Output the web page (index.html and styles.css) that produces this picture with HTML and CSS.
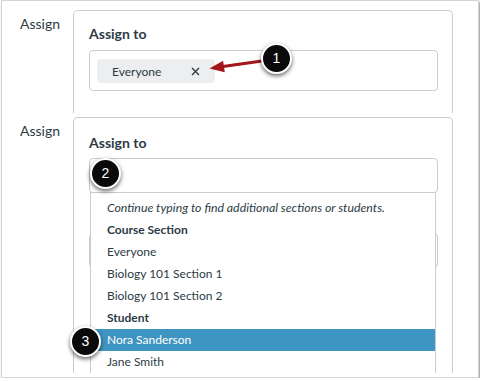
FILE: index.html
```html
<!DOCTYPE html>
<html lang="en">
<head>
    <meta charset="UTF-8">
    <meta name="viewport" content="width=device-width, initial-scale=1.0">
    <title>Assign To</title>
    <link rel="stylesheet" href="styles.css">
</head>
<body>

<div class="frame">
    <div class="row row-first">
        <div class="row-label">Assign</div>
        <div class="card card-first">
            <h2 class="card-title">Assign to</h2>
            <div class="assign-input">
                <span class="token">
                    Everyone
                    <svg class="token-remove" width="9" height="9" viewBox="0 0 9 9">
                        <path d="M1 1 L8 8 M8 1 L1 8" stroke="#2d3b45" stroke-width="1.4" fill="none"/>
                    </svg>
                </span>
            </div>
        </div>
    </div>

    <div class="row row-second">
        <div class="row-label">Assign</div>
        <div class="card card-second">
            <h2 class="card-title">Assign to</h2>
            <div class="picker">
                <div class="assign-input assign-input-open"></div>
                <ul class="picker-menu">
                    <li class="picker-hint">Continue typing to find additional sections or students.</li>
                    <li class="picker-group">Course Section</li>
                    <li>Everyone</li>
                    <li>Biology 101 Section 1</li>
                    <li>Biology 101 Section 2</li>
                    <li class="picker-group">Student</li>
                    <li class="is-active">Nora Sanderson</li>
                    <li>Jane Smith</li>
                </ul>
            </div>
            <!-- due date field, hidden behind the open menu -->
            <div class="text-input"></div>
        </div>
    </div>

    <!-- callouts -->
    <svg class="arrow" width="476" height="120" viewBox="0 0 476 120">
        <line x1="260" y1="60" x2="221" y2="65.6" stroke="#a3161b" stroke-width="3"/>
        <polygon points="207.5,67.5 221.1,59.8 222.8,71.2" fill="#a3161b"/>
    </svg>
    <span class="callout callout-1">1</span>
    <span class="callout callout-2">2</span>
    <span class="callout callout-3">3</span>
</div>

</body>
</html>
```

FILE: styles.css
```css
body {
    margin: 0;
    font-family: Lato, "Liberation Sans", sans-serif;
    color: #2d3b45;
    background: #fff;
}
.frame {
    position: relative;
    box-sizing: border-box;
    width: 478px;
    height: 378px;
    margin-left: 1px;
    padding-left: 18px;
    border: 1px solid #d4d4d4;
    box-shadow: 1px 2px 2px rgba(0, 0, 0, 0.45);
    overflow: hidden;
}
.row {
    display: flex;
}
.row-first {
    margin-top: 9px;
}
.row-second {
    margin-top: 4px;
}
.row-label {
    width: 53px;
    padding-top: 5px;
    font-size: 14px;
    line-height: 18px;
}
.card {
    box-sizing: border-box;
    width: 380px;
    padding: 0 14px 0 15px;
    border: 1px solid #c7cdd1;
    border-bottom: none;
    border-radius: 5px 5px 0 0;
}
.card-first {
    padding-top: 14px;
    padding-bottom: 22px;
}
.card-second {
    height: 256px;
    padding-top: 16px;
    overflow: hidden;
}
.card-title {
    margin: 0 0 7px;
    font-size: 14px;
    line-height: 18px;
    font-weight: bold;
}
.card-second .card-title {
    margin-bottom: 6px;
}
.assign-input {
    box-sizing: border-box;
    height: 41px;
    padding: 8px 7px;
    border: 1px solid #c7cdd1;
    border-radius: 4px;
}
.assign-input-open {
    height: 35px;
}
.token {
    box-sizing: border-box;
    display: flex;
    align-items: center;
    justify-content: space-between;
    width: 118px;
    height: 24px;
    padding: 0 15px;
    background: #eceef0;
    border-radius: 4px;
    font-size: 12px;
}
.picker {
    position: relative;
}
.picker-menu {
    position: absolute;
    top: 34px;
    left: 1px;
    box-sizing: border-box;
    width: 346px;
    height: 200px;
    margin: 0;
    padding: 4px 0 0;
    list-style: none;
    background: #fff;
    border: 1px solid #c7cdd1;
    z-index: 2;
}
.picker-menu li {
    padding-left: 16px;
    font-size: 12px;
    line-height: 22px;
}
.picker-menu .picker-hint {
    font-style: italic;
    font-size: 12.3px;
}
.picker-menu .picker-group {
    font-weight: bold;
}
.picker-menu .is-active {
    background: #3f95c1;
    color: #fff;
}
.text-input {
    box-sizing: border-box;
    height: 35px;
    margin-top: 40px;
    border: 1px solid #c7cdd1;
    border-radius: 4px;
}
.arrow {
    position: absolute;
    left: 0;
    top: 0;
    z-index: 3;
}
.callout {
    position: absolute;
    box-sizing: border-box;
    width: 31px;
    height: 31px;
    border: 2px solid #fff;
    border-radius: 50%;
    background: #0a0a0a;
    box-shadow: 0 2px 4px rgba(0, 0, 0, 0.6);
    color: #fff;
    font-family: "Liberation Sans", Arial, sans-serif;
    font-size: 14px;
    line-height: 27px;
    text-align: center;
    z-index: 4;
}
.callout-1 {
    left: 259px;
    top: 42px;
}
.callout-2 {
    left: 88px;
    top: 157px;
}
.callout-3 {
    left: 68px;
    top: 325px;
}
```
